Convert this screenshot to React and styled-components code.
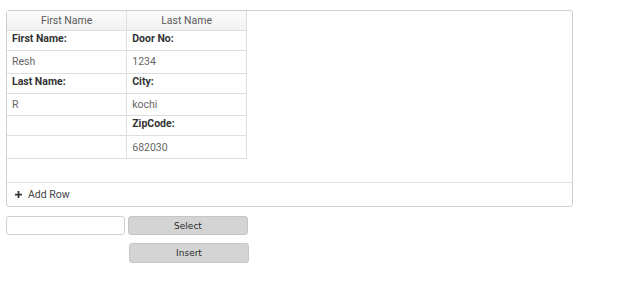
import styled, { createGlobalStyle } from "styled-components";

const GlobalStyle = createGlobalStyle`
  body {
    margin: 0;
    background: #fff;
    font-family: Roboto, "Liberation Sans", Arial, sans-serif;
  }
`;

const Page = styled.div`
  padding: 10px 0 0 6px;
  width: 567px;
`;

const Panel = styled.div`
  border: 1px solid #cfcfcf;
  border-radius: 3px;
  background: #fff;
`;

const Content = styled.div`
  height: 171px;
  border-bottom: 1px solid #e3e3e3;
`;

const Table = styled.table`
  border-collapse: collapse;
  table-layout: fixed;
  width: 240px;
  font-size: 10.5px;
`;

const HeadCell = styled.th`
  height: 19px;
  padding: 0;
  font-weight: normal;
  color: #5a5a5a;
  text-align: center;
  background: linear-gradient(#fbfbfb, #f1f1f1);
  border-right: 1px solid #dedede;
  border-bottom: 1px solid #dedede;
`;

const Cell = styled.td`
  height: ${(p) => (p.$label ? "18px" : "21.67px")};
  padding: ${(p) => (p.$label ? "1px 5px 0" : "0 5px")};
  vertical-align: ${(p) => (p.$label ? "top" : "middle")};
  font-weight: ${(p) => (p.$label ? "bold" : "normal")};
  color: ${(p) => (p.$label ? "#333" : "#666")};
  border-right: 1px solid #dedede;
  border-bottom: 1px solid #dedede;
  white-space: nowrap;
`;

const Toolbar = styled.div`
  height: 23px;
  display: flex;
  align-items: center;
  padding-left: 8px;
  gap: 6px;
  font-size: 10.5px;
  color: #444;
`;

const Plus = styled.svg`
  width: 7px;
  height: 7px;
`;

const Controls = styled.div`
  display: grid;
  grid-template-columns: 120px 120px;
  column-gap: 2px;
  row-gap: 8px;
  margin: 9px 0 0 6px;
`;

const TextBox = styled.input`
  box-sizing: border-box;
  width: 119px;
  height: 19px;
  border: 1px solid #cfcfcf;
  border-radius: 3px;
  padding: 0 4px;
  outline: none;
`;

const Button = styled.button`
  box-sizing: border-box;
  height: ${(p) => (p.$tall ? "20px" : "19px")};
  width: 120px;
  margin-left: ${(p) => (p.$shift ? "1px" : "0")};
  border: 1px solid #c6c6c6;
  border-radius: 3px;
  background: #d4d4d4;
  color: #2b2b2b;
  font-family: "DejaVu Sans", Verdana, sans-serif;
  font-size: 9px;
  padding: 0;
`;

const rows = [
  { label: true, cells: ["First Name:", "Door No:"] },
  { cells: ["Resh", "1234"] },
  { label: true, cells: ["Last Name:", "City:"] },
  { cells: ["R", "kochi"] },
  { label: true, cells: ["", "ZipCode:"] },
  { cells: ["", "682030"] },
];

export default function App() {
  return (
    <>
      <GlobalStyle />
      <Page>
        <Panel>
          <Content>
            <Table>
              <thead>
                <tr>
                  <HeadCell>First Name</HeadCell>
                  <HeadCell>Last Name</HeadCell>
                </tr>
              </thead>
              <tbody>
                {rows.map((r, i) => (
                  <tr key={i}>
                    {r.cells.map((c, j) => (
                      <Cell key={j} $label={r.label}>
                        {c}
                      </Cell>
                    ))}
                  </tr>
                ))}
              </tbody>
            </Table>
          </Content>
          <Toolbar>
            <Plus viewBox="0 0 8 8">
              <path d="M3 0h2v3h3v2H5v3H3V5H0V3h3z" fill="#333" />
            </Plus>
            Add Row
          </Toolbar>
        </Panel>
      </Page>
      <Controls>
        <TextBox />
        <Button>Select</Button>
        <span />
        <Button $shift $tall>
          Insert
        </Button>
      </Controls>
    </>
  );
}
